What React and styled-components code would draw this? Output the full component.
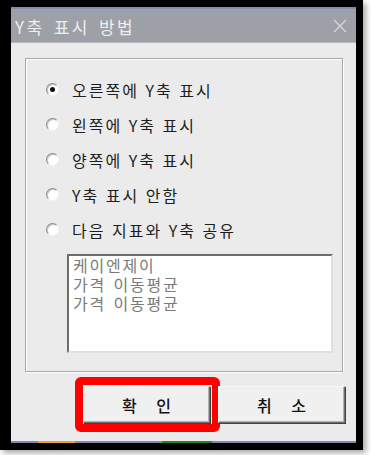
import React from "react";
import styled, { createGlobalStyle } from "styled-components";

const Global = createGlobalStyle`
  html, body { margin: 0; padding: 0; background: #ffffff; }
  body { font-family: "Noto Sans CJK KR", "Noto Sans", sans-serif; }
`;

const Page = styled.div`
  width: 371px;
  height: 455px;
  background: #ffffff;
  overflow: hidden;
`;

const Frame = styled.div`
  width: 345px;
  height: 436px;
  border-style: solid;
  border-color: #000;
  border-width: 7px 7px 7px 11px;
  box-shadow: 3px 3px 6px rgba(0, 0, 0, 0.35);
  display: flex;
  flex-direction: column;
  background: #ebebeb;
`;

const TopLine = styled.div`
  height: 2px;
  background: #8a88b0;
`;

const TitleBar = styled.div`
  height: 33px;
  background: #9da1a7;
  display: flex;
  align-items: center;
  justify-content: space-between;
  padding: 0 9px 0 4px;
  border-bottom: 1px solid #b8bbbf;
`;

const Title = styled.span`
  color: #eeeeee;
  font-size: 17px;
  letter-spacing: 2.4px;
  word-spacing: 3px;
  line-height: 1;
  padding-top: 1px;
`;

const Body = styled.div`
  flex: 1;
  display: flex;
  flex-direction: column;
  padding: 15px 13px 0 14px;
`;

const Group = styled.div`
  box-sizing: border-box;
  height: 314px;
  border: 1px solid #a8a8a8;
  box-shadow: inset 1px 1px 0 #ffffff, 1px 1px 0 #ffffff;
  padding: 13px 0 0 20px;
  display: flex;
  flex-direction: column;
`;

const RadioRow = styled.label`
  height: 35px;
  display: flex;
  align-items: center;
  gap: 13px;
  color: #1e1e1e;
  font-size: 16px;
  letter-spacing: 2px;
  word-spacing: 1px;
`;

const Circle = styled.span`
  width: 13px;
  height: 13px;
  border-radius: 50%;
  box-sizing: border-box;
  background: #ffffff;
  border: 1px solid;
  border-color: #8a8a8a #f4f4f4 #f4f4f4 #8a8a8a;
  box-shadow: inset 1px 1px 0 #c8c8c8;
  display: flex;
  align-items: center;
  justify-content: center;
  flex-shrink: 0;
  &::after {
    content: "";
    width: 5px;
    height: 5px;
    border-radius: 50%;
    background: ${(p) => (p.$checked ? "#111" : "transparent")};
  }
`;

const ListBox = styled.div`
  margin: 7px 0 0 21px;
  width: 258px;
  height: 95px;
  box-sizing: content-box;
  background: #ffffff;
  border: 2px solid;
  border-color: #6c6c6c #e0e0e0 #e0e0e0 #6c6c6c;
  padding: 0 0 0 4px;
`;

const ListText = styled.div`
  white-space: pre-line;
  color: #7a7a7a;
  font-size: 16px;
  line-height: 19px;
  letter-spacing: 1.8px;
  word-spacing: 2px;
`;

const ButtonRow = styled.div`
  display: flex;
  justify-content: flex-end;
  gap: 8px;
  padding-top: 14px;
  margin-right: -2px;
`;

const ButtonWrap = styled.div`
  position: relative;
`;

const Button = styled.button`
  width: 127px;
  height: 37px;
  box-sizing: border-box;
  background: #f0f0f0;
  border: 1px solid;
  border-color: #f8f8f8 #707070 #707070 #f8f8f8;
  box-shadow: inset -1px -1px 0 #b0b0b0, 1px 1px 0 #404040;
  font-family: "Noto Sans CJK KR", sans-serif;
  font-size: 16px;
  font-weight: 500;
  color: #111;
  word-spacing: 16px;
  padding: 0;
`;

const Highlight = styled.div`
  position: absolute;
  top: -9px;
  left: -8px;
  right: -10px;
  bottom: -9px;
  border: 8px solid #ff0000;
  border-radius: 6px;
  box-sizing: border-box;
  pointer-events: none;
`;

const BottomStrip = styled.div`
  height: 2px;
  background: #8886b0;
  display: flex;
  margin: auto -13px 0 -14px;
`;

const Segment = styled.div`
  width: ${(p) => p.$w}px;
  margin-left: ${(p) => p.$ml}px;
  background: ${(p) => p.$c};
`;

const options = [
  "오른쪽에 Y축 표시",
  "왼쪽에 Y축 표시",
  "양쪽에 Y축 표시",
  "Y축 표시 안함",
  "다음 지표와 Y축 공유",
];

const listItems = ["케이엔제이", "가격 이동평균", "가격 이동평균"];

export default function App() {
  return (
    <Page>
      <Global />
      <Frame>
        <TopLine />
        <TitleBar>
          <Title>Y축 표시 방법</Title>
          <svg width="14" height="14" viewBox="0 0 14 14">
            <path d="M1 1 L13 13 M13 1 L1 13" stroke="#d6d8da" strokeWidth="1.3" fill="none" />
          </svg>
        </TitleBar>
        <Body>
          <Group>
            {options.map((o, i) => (
              <RadioRow key={o}>
                <Circle $checked={i === 0} />
                <span>{o}</span>
              </RadioRow>
            ))}
            <ListBox>
              <ListText>{listItems.join("\n")}</ListText>
            </ListBox>
          </Group>
          <ButtonRow>
            <ButtonWrap>
              <Button>확 인</Button>
              <Highlight />
            </ButtonWrap>
            <ButtonWrap>
              <Button>취 소</Button>
            </ButtonWrap>
          </ButtonRow>
          <BottomStrip>
            <Segment $ml={27} $w={37} $c="#f0a030" />
            <Segment $ml={87} $w={50} $c="#1a8a30" />
          </BottomStrip>
        </Body>
      </Frame>
    </Page>
  );
}
